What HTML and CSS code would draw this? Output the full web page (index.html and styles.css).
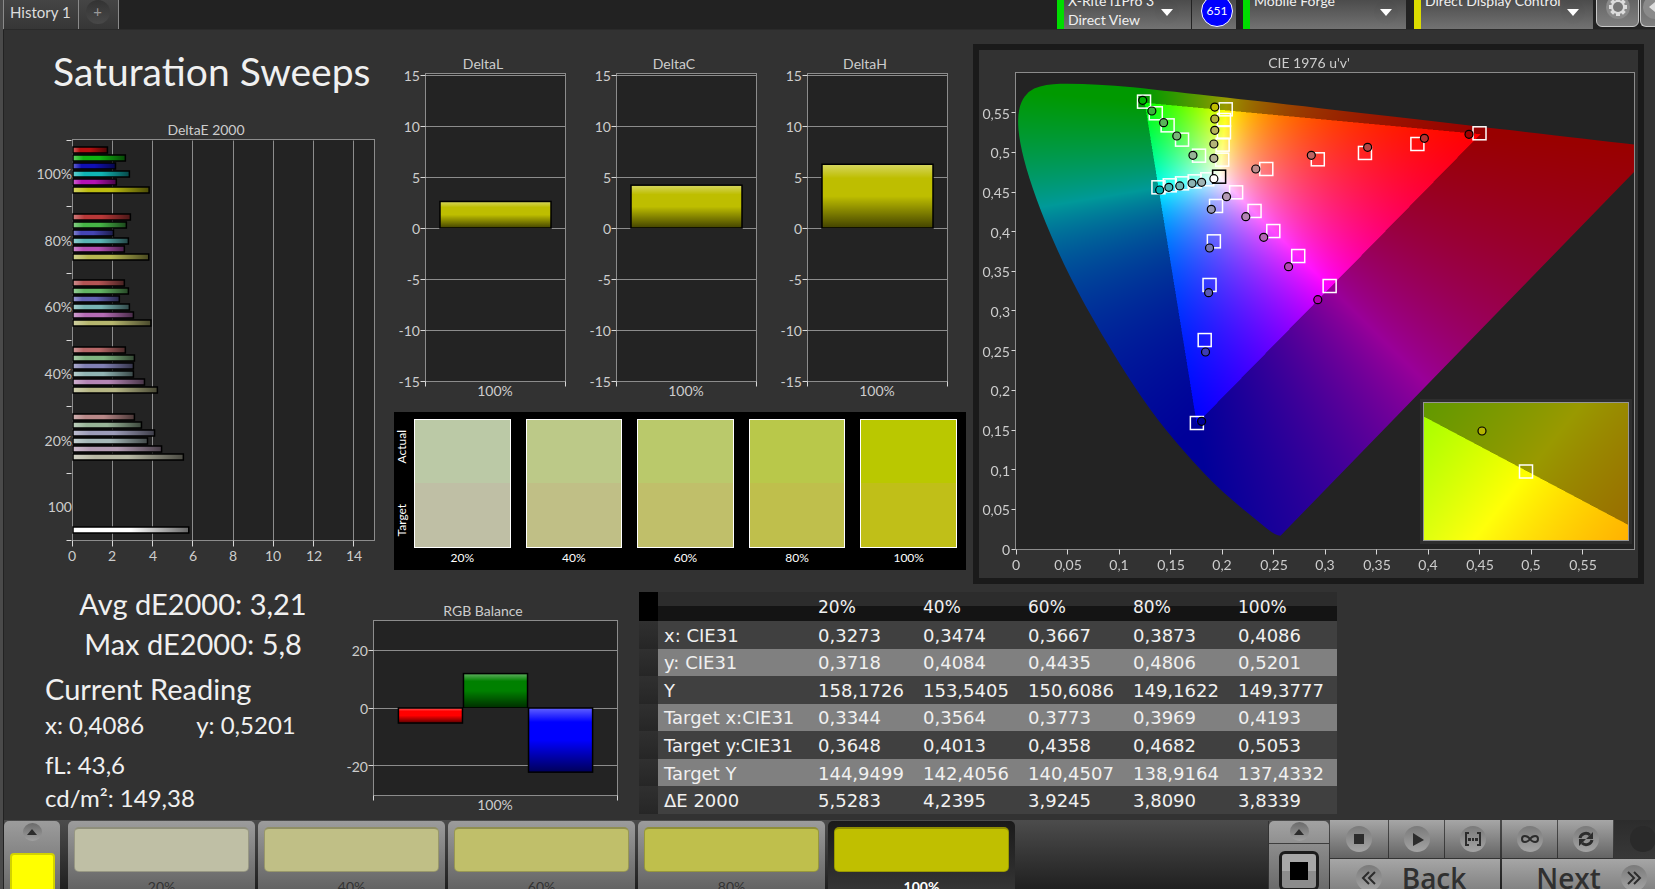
FILE: index.html
```html
<!DOCTYPE html>
<html lang="en">
<head>
    <meta charset="UTF-8">
    <meta name="viewport" content="width=device-width, initial-scale=1.0">
    <title>Saturation Sweeps</title>
    <link rel="stylesheet" href="styles.css">
</head>
<body>
    <header class="topbar">
        <nav class="tabs">
            <button class="tab" type="button">History 1</button>
            <button class="tab tab-add" type="button"><span>+</span></button>
        </nav>
        <div class="devices">
            <button class="device meter" type="button">
                <span class="device-name">X-Rite i1Pro 3<br>Direct View</span>
                <span class="drop"></span>
            </button>
            <div class="counter"><span>651</span></div>
            <button class="device source" type="button">
                <span class="device-name">Mobile Forge</span>
                <span class="drop"></span>
            </button>
            <button class="device display" type="button">
                <span class="device-name">Direct Display Control</span>
                <span class="drop"></span>
            </button>
            <button class="tool" type="button" aria-label="Settings">
                <svg width="28" height="28" viewBox="-14 -14 28 28">
                    <circle r="12" fill="#8a8a8a"/>
                    <g fill="#dcdcdc">
                        <path d="M-2-9h4v18h-4z"/>
                        <path d="M-2-9h4v18h-4z" transform="rotate(45)"/>
                        <path d="M-2-9h4v18h-4z" transform="rotate(90)"/>
                        <path d="M-2-9h4v18h-4z" transform="rotate(135)"/>
                        <circle r="7"/>
                    </g>
                    <circle r="5" fill="#777"/>
                </svg>
            </button>
            <button class="tool tool-cut" type="button" aria-label="Back">
                <svg width="28" height="28" viewBox="-14 -14 28 28">
                    <circle r="12" fill="#8a8a8a"/>
                    <path d="M-6 0L0-5v10z" fill="#dcdcdc"/>
                </svg>
            </button>
        </div>
    </header>

    <main class="board">
        <section class="charts">
            <div class="col-error">
                <h1>Saturation Sweeps</h1>
                <svg id="deltaE" class="chart chart-error"></svg>
            </div>

            <div class="col-delta">
                <div class="deltas">
                    <svg id="deltaL" class="chart chart-delta"></svg>
                    <svg id="deltaC" class="chart chart-delta"></svg>
                    <svg id="deltaH" class="chart chart-delta"></svg>
                </div>
                <div class="swatches">
                    <div class="swatch-side"><span>Actual</span><span>Target</span></div>
                    <figure><div class="pair s20"></div><figcaption>20%</figcaption></figure>
                    <figure><div class="pair s40"></div><figcaption>40%</figcaption></figure>
                    <figure><div class="pair s60"></div><figcaption>60%</figcaption></figure>
                    <figure><div class="pair s80"></div><figcaption>80%</figcaption></figure>
                    <figure><div class="pair s100"></div><figcaption>100%</figcaption></figure>
                </div>
            </div>

            <div class="cie">
                <canvas id="gamut"></canvas>
                <svg id="cie" class="chart chart-cie"></svg>
            </div>
        </section>

        <section class="details">
            <div class="stats">
                <div class="totals">
                    <p>Avg dE2000: 3,21</p>
                    <p>Max dE2000: 5,8</p>
                </div>
                <h2>Current Reading</h2>
                <p class="xy"><span>x: 0,4086</span><span>y: 0,5201</span></p>
                <p class="fl">fL: 43,6</p>
                <p class="cd">cd/m²: 149,38</p>
            </div>

            <svg id="rgb" class="chart chart-rgb"></svg>

            <table class="readings">
                <thead>
                    <tr><th class="mark"></th><th></th><th>20%</th><th>40%</th><th>60%</th><th>80%</th><th>100%</th></tr>
                </thead>
                <tbody>
                    <tr><td class="mark"></td><th>x: CIE31</th><td>0,3273</td><td>0,3474</td><td>0,3667</td><td>0,3873</td><td>0,4086</td></tr>
                    <tr><td class="mark"></td><th>y: CIE31</th><td>0,3718</td><td>0,4084</td><td>0,4435</td><td>0,4806</td><td>0,5201</td></tr>
                    <tr><td class="mark"></td><th>Y</th><td>158,1726</td><td>153,5405</td><td>150,6086</td><td>149,1622</td><td>149,3777</td></tr>
                    <tr><td class="mark"></td><th>Target x:CIE31</th><td>0,3344</td><td>0,3564</td><td>0,3773</td><td>0,3969</td><td>0,4193</td></tr>
                    <tr><td class="mark"></td><th>Target y:CIE31</th><td>0,3648</td><td>0,4013</td><td>0,4358</td><td>0,4682</td><td>0,5053</td></tr>
                    <tr><td class="mark"></td><th>Target Y</th><td>144,9499</td><td>142,4056</td><td>140,4507</td><td>138,9164</td><td>137,4332</td></tr>
                    <tr><td class="mark"></td><th>ΔE 2000</th><td>5,5283</td><td>4,2395</td><td>3,9245</td><td>3,8090</td><td>3,8339</td></tr>
                </tbody>
            </table>
        </section>
    </main>

    <footer class="bottombar">
        <button class="current" type="button" aria-label="Current color">
            <span class="up"></span>
            <span class="current-color"></span>
        </button>
        <div class="steps">
            <button class="step c20" type="button"><span></span>20%</button>
            <button class="step c40" type="button"><span></span>40%</button>
            <button class="step c60" type="button"><span></span>60%</button>
            <button class="step c80" type="button"><span></span>80%</button>
            <button class="step c100 selected" type="button"><span></span>100%</button>
        </div>
        <div class="pattern">
            <button class="pattern-up" type="button" aria-label="Open patterns"><span class="up"></span></button>
            <button class="pattern-stop" type="button" aria-label="Pattern window"><span></span></button>
        </div>
        <div class="transport">
            <div class="keys">
                <button type="button" aria-label="Stop">
                    <svg viewBox="-13 -13 26 26"><path d="M-5-5H5V5H-5z"/></svg>
                </button>
                <button type="button" aria-label="Play">
                    <svg viewBox="-13 -13 26 26"><path d="M-4-6L7 1L-4 7z"/></svg>
                </button>
                <button type="button" aria-label="Read series">
                    <svg viewBox="-13 -13 26 26"><path class="line" d="M-4-6H-7V6H-4M4-6H7V6H4"/><path d="M-5-1h3v3h-3zM-1-1h2v3h-2zM2-1h3v3H2z"/></svg>
                </button>
                <button class="wide-gap" type="button" aria-label="Continuous">
                    <svg viewBox="-13 -13 26 26"><path class="line" d="M0 0C-3-4-8-4-8 0S-3 4 0 0S8-4 8 0S3 4 0 0z"/></svg>
                </button>
                <button type="button" aria-label="Refresh">
                    <svg viewBox="-13 -13 26 26"><path class="line thick" d="M-6-1A6 6 0 0 1 4-4M6 1A6 6 0 0 1-4 4"/><path d="M7-7V0H0zM-7 7V0H0z"/></svg>
                </button>
                <button class="off" type="button" disabled aria-label="Record">
                    <svg viewBox="-13 -13 26 26"></svg>
                </button>
            </div>
            <div class="steps-nav">
                <button class="back" type="button">
                    <svg viewBox="-13 -13 26 26"><path class="line" d="M0-6L-6 0L0 6M6-6L0 0L6 6"/></svg>Back
                </button>
                <button class="next" type="button">
                    Next<svg viewBox="-13 -13 26 26"><path class="line" d="M0-6L6 0L0 6M-6-6L0 0L-6 6"/></svg>
                </button>
            </div>
        </div>
    </footer>

    <svg class="defs" width="0" height="0">
        <defs>
            <linearGradient id="shadeV" x1="0" y1="0" x2="0" y2="1">
                <stop offset="0" stop-color="#fff" stop-opacity=".38"/>
                <stop offset=".22" stop-color="#fff" stop-opacity="0"/>
                <stop offset=".5" stop-color="#000" stop-opacity="0"/>
                <stop offset="1" stop-color="#000" stop-opacity=".65"/>
            </linearGradient>
            <linearGradient id="shadeH">
                <stop offset="0" stop-color="#fff" stop-opacity=".35"/>
                <stop offset=".2" stop-color="#fff" stop-opacity="0"/>
                <stop offset=".5" stop-color="#000" stop-opacity="0"/>
                <stop offset="1" stop-color="#000" stop-opacity=".6"/>
            </linearGradient>
        </defs>
    </svg>

    <script src="charts.js"></script>
</body>
</html>
```

FILE: styles.css
```css
* {
    box-sizing: border-box;
}
body {
    font-family: Lato, Calibri, sans-serif;
    font-size: 14px;
    color: #f0f0f0;
    margin: 0;
    height: 100vh;
    display: flex;
    flex-direction: column;
    overflow: hidden;
    background-color: #323232;
    border-left: 3px solid #4a4a4a;
}
button {
    font-family: inherit;
    font-size: 14px;
    color: inherit;
    border: none;
    padding: 0;
    cursor: pointer;
}
h1, h2, p, figure {
    margin: 0;
    font-weight: normal;
}
.defs {
    display: block;
    flex: none;
}

/* top bar */
.topbar {
    flex: none;
    height: 30px;
    display: flex;
    justify-content: space-between;
    align-items: flex-end;
    background: #222;
    overflow: hidden;
    border-bottom: 1px solid #2a2a2a;
}
.tabs {
    display: flex;
}
.tab {
    height: 40px;
    padding: 5px 7px 0 6px;
    font-size: 15px;
    line-height: 18px;
    color: #dcdcdc;
    background: linear-gradient(#4a4a4a, #363636);
    border-left: 1px solid #8a8a8a;
}
.tab-add {
    padding: 6px 8px 0 7px;
    border-right: 1px solid #8a8a8a;
}
.tab-add span {
    display: block;
    width: 24px;
    height: 24px;
    border-radius: 50%;
    line-height: 23px;
    color: #999;
    background: linear-gradient(#333, #484848);
}
.devices {
    display: flex;
    align-items: flex-end;
}
.device {
    height: 48px;
    display: flex;
    justify-content: space-between;
    align-items: flex-start;
    padding: 10px 8px 0 4px;
    text-align: left;
    line-height: 19px;
    background: linear-gradient(#333, #4c4c4c 40%, #727272);
    border-left: 7px solid #00dc00;
}
.device-name {
    white-space: nowrap;
}
.drop {
    width: 24px;
    height: 24px;
    margin-top: 9px;
    border-radius: 50%;
    background: linear-gradient(#4a4a4a, #6a6a6a);
    display: flex;
    justify-content: center;
    align-items: center;
}
.drop::before {
    content: "";
    border: 6px solid transparent;
    border-top: 7px solid #fff;
    border-bottom: 0;
}
.meter {
    width: 134px;
    padding-right: 12px;
}
.source {
    width: 163px;
    margin-left: 7px;
}
.display {
    width: 179px;
    margin-left: 8px;
    border-left-color: #dcdc00;
}
.counter {
    width: 44px;
    height: 48px;
    display: flex;
    justify-content: center;
    align-items: center;
    padding: 0 0 0 6px;
    margin-left: 1px;
    background: linear-gradient(#333, #4c4c4c 40%, #727272);
}
.counter span {
    width: 32px;
    height: 32px;
    margin-top: 11px;
    border: 1px solid #fff;
    border-radius: 50%;
    background: #00f;
    color: #fff;
    font-size: 12px;
    line-height: 30px;
    text-align: center;
}
.tool {
    width: 43px;
    height: 42px;
    margin: 0 0 2px 3px;
    padding-top: 8px;
    border: 1px solid #c8c8c8;
    border-radius: 6px;
    background: linear-gradient(#555, #808080);
}
.tool-cut {
    width: 15px;
    margin-left: 1px;
    border-right: none;
    border-radius: 6px 0 0 6px;
    overflow: hidden;
}
.tool svg {
    display: block;
    margin: auto;
    margin-top: -7px;
}

/* charts */
.board {
    flex: 1;
    min-height: 0;
    padding: 14px 11px 0 0;
    border-left: 1px solid #222;
}
.charts {
    display: grid;
    grid-template-columns: minmax(0, 384fr) minmax(0, 573fr) minmax(0, 671fr);
    column-gap: 6px;
}
.chart {
    display: block;
    width: 100%;
}
.chart text {
    font-size: 14px;
    fill: #cdcdcd;
}
.col-error {
    padding: 3px 13px 0 33px;
}
h1 {
    font-size: 39px;
    line-height: 48px;
    padding-left: 16px;
    margin-bottom: 25px;
    white-space: nowrap;
}
.chart-error {
    height: 446px;
}
.deltas {
    display: grid;
    grid-template-columns: repeat(3, minmax(0, 1fr));
    column-gap: 22px;
    padding: 10px 18px 0 4px;
}
.chart-delta {
    height: 348px;
}
.swatches {
    display: flex;
    gap: 15px;
    height: 158px;
    margin: 10px 1px 0 0;
    padding: 7px 9px 0 0;
    background: #000;
    font-size: 12px;
    color: #fff;
}
.swatch-side {
    flex: none;
    width: 20px;
    height: 129px;
    margin-right: -15px;
    display: flex;
    flex-direction: column;
}
.swatch-side span {
    flex: 1;
    writing-mode: vertical-rl;
    transform: rotate(180deg);
    text-align: center;
    line-height: 16px;
}
.swatch-side span:first-child {
    padding-top: 8px;
}
.swatch-side span:last-child {
    padding-bottom: 8px;
}
figure {
    flex: 1;
    text-align: center;
}
.pair {
    height: 129px;
    border: 1px solid #fff;
}
figcaption {
    line-height: 20px;
}
.s20 {
    background: linear-gradient(#bbc9a6 50%, #bfbfa5 50%);
}
.s40 {
    background: linear-gradient(#bcc988 50%, #c0bf86 50%);
}
.s60 {
    background: linear-gradient(#bac96b 50%, #c0bf6a 50%);
}
.s80 {
    background: linear-gradient(#b9c84a 50%, #bfbf4c 50%);
}
.s100 {
    background: linear-gradient(#bac800 50%, #c0bf18 50%);
}
.cie {
    display: grid;
    border: 6px solid #1a1a1a;
    height: 540px;
}
.cie canvas {
    grid-area: 1 / 1;
    margin: 23px 0 0 37px;
    background: #232323;
}
.cie svg {
    grid-area: 1 / 1;
    height: 528px;
    z-index: 1;
}

/* numbers */
.details {
    display: flex;
}
.stats {
    flex: none;
    width: 342px;
    padding-left: 41px;
    font-size: 24px;
    line-height: 32px;
}
.totals {
    width: 296px;
    text-align: center;
    font-size: 29px;
    line-height: 40px;
}
h2 {
    font-size: 29px;
    line-height: 36px;
    margin-top: 7px;
}
.xy {
    display: flex;
    gap: 52px;
    margin-top: 2px;
}
.fl {
    margin-top: 8px;
}
.cd {
    margin-top: 1px;
}
.chart-rgb {
    flex: none;
    width: 273px;
    height: 216px;
    margin-top: 17px;
}
.readings {
    width: 698px;
    margin: 8px 0 0 20px;
    border-collapse: collapse;
    table-layout: fixed;
    font-family: "DejaVu Sans", Verdana, sans-serif;
    font-size: 18px;
    height: 222px;
}
.readings th, .readings td {
    height: 27px;
    padding: 2px 0 0 6px;
    line-height: 20px;
    text-align: left;
    font-weight: normal;
    white-space: nowrap;
}
.readings thead th {
    height: 29px;
    width: 105px;
    padding-top: 0;
    font-size: 17px;
    background: linear-gradient(#2c2c2c 50%, #141414 50%);
}
.readings thead th:nth-child(2) {
    width: 154px;
}
.readings tbody tr {
    background: #404040;
}
.readings tbody tr:nth-child(even) {
    background: #808080;
}
.readings .mark {
    background: linear-gradient(#303030, #262626);
    padding: 0;
}
.readings thead .mark {
    width: 19px;
    background: #000;
}

/* bottom bar */
.bottombar {
    flex: none;
    height: 69px;
    display: flex;
    align-items: flex-start;
    background: linear-gradient(#4c4c4c, #202020);
    border-left: 1px solid #222;
    overflow: hidden;
}
.up {
    display: flex;
    width: 19px;
    height: 19px;
    border-radius: 50%;
    justify-content: center;
    align-items: center;
    background: linear-gradient(#6a6a6a, #a0a0a0);
}
.up::before {
    content: "";
    border: 5px solid transparent;
    border-bottom: 6px solid #2c2c2c;
    border-top: 0;
}
.current {
    flex: none;
    width: 56px;
    height: 90px;
    display: flex;
    flex-direction: column;
    align-items: center;
    padding-top: 2px;
    margin-top: 1px;
    gap: 12px;
    border-radius: 5px;
    background: linear-gradient(#9c9c9c, #5c5c5c);
}
.current-color {
    width: 45px;
    height: 60px;
    border-radius: 4px;
    background: #ff0;
    border: 2px solid #d2d200;
}
.steps {
    flex: 1;
    display: flex;
    gap: 3px;
    padding: 1px 0 0 8px;
}
.step {
    width: 187px;
    height: 90px;
    display: flex;
    flex-direction: column;
    align-items: center;
    padding-top: 6px;
    line-height: 16px;
    color: #333;
    border-radius: 5px;
    background: linear-gradient(#9c9c9c, #646464 75%);
}
.step span {
    width: 175px;
    height: 45px;
    margin-bottom: 7px;
    border-radius: 5px;
    border: 1px solid rgba(0, 0, 0, 0.2);
    border-top: 2px solid rgba(0, 0, 0, 0.25);
}
.step.selected {
    color: #fff;
    font-weight: bold;
    background: linear-gradient(#1a1a1a, #343434 75%);
}
.c20 span {
    background: #bfbfa5;
}
.c40 span {
    background: #c0bf86;
}
.c60 span {
    background: #c0bf6a;
}
.c80 span {
    background: #bfbf4c;
}
.c100 span {
    background: #c0bf00;
}
.pattern {
    flex: none;
    width: 61px;
    margin-top: 1px;
    border-left: 1px solid #333;
}
.pattern-up {
    width: 100%;
    height: 22px;
    padding-top: 1px;
    display: flex;
    justify-content: center;
    border-radius: 5px 5px 0 0;
    background: linear-gradient(#a2a2a2, #909090);
}
.pattern-stop {
    width: 100%;
    height: 60px;
    margin-top: 1px;
    padding-top: 7px;
    display: flex;
    justify-content: center;
    align-items: flex-start;
    background: linear-gradient(#8c8c8c, #606060);
}
.pattern-stop span {
    width: 40px;
    height: 40px;
    border: 3px solid #1c1c1c;
    border-radius: 6px;
    background: linear-gradient(#000, #000) center / 18px 18px no-repeat, linear-gradient(#a8a8a8 50%, #8c8c8c 50%);
}
.transport {
    flex: none;
    width: 325px;
    margin-left: 1px;
}
.keys, .steps-nav {
    display: flex;
    gap: 1px;
}
.transport button {
    flex: none;
    display: flex;
    align-items: center;
    justify-content: center;
    background: linear-gradient(#a6a6a6, #646464);
}
.transport svg {
    width: 26px;
    height: 26px;
    border-radius: 50%;
    background: linear-gradient(#7a7a7a, #a4a4a4);
    fill: #2c2c2c;
}
.transport .line {
    fill: none;
    stroke: #2c2c2c;
    stroke-width: 2;
}
.transport .thick {
    stroke-width: 3;
}
.keys button {
    width: 55px;
    height: 38px;
}
.keys button:first-child {
    width: 58px;
}
.keys .wide-gap, .steps-nav .next {
    margin-left: 1px;
}
.keys .off {
    background: linear-gradient(#2c2c2c, #383838);
    width: 58px;
}
.keys .off svg {
    background: #2a2a2a;
}
.steps-nav {
    margin-top: 1px;
}
.transport .steps-nav button {
    width: 170px;
    height: 56px;
    align-items: flex-start;
    padding: 0 8px 0 0;
    gap: 20px;
    font-family: "Open Sans", "Noto Sans", sans-serif;
    font-size: 28px;
    font-weight: 600;
    line-height: 38px;
    color: #303030;
}
.transport .steps-nav .next {
    padding: 0 0 0 9px;
}
.steps-nav svg {
    margin-top: 6px;
}
```

FILE: charts.js
```js
const GRID = '#8c8c8c';
const TICK = '#d8d8d8';

function add(parent, name, attrs, text) {
    const el = document.createElementNS('http://www.w3.org/2000/svg', name);
    for (const key in attrs) el.setAttribute(key, attrs[key]);
    if (text !== undefined) el.textContent = text;
    parent.appendChild(el);
    return el;
}

function line(svg, x1, y1, x2, y2, color) {
    const snap = v => Math.floor(v) + 0.5;
    add(svg, 'line', { x1: snap(x1), y1: snap(y1), x2: snap(x2), y2: snap(y2), stroke: color || GRID });
}

function label(svg, x, y, text, anchor) {
    add(svg, 'text', { x: Math.round(x), y: Math.round(y), 'text-anchor': anchor || 'middle' }, text);
}

function bar(svg, x, y, w, h, color, shade) {
    const box = { x: x, y: y, width: w, height: h };
    add(svg, 'rect', { ...box, fill: color });
    add(svg, 'rect', { ...box, fill: 'url(#' + shade + ')', stroke: '#000', 'stroke-width': 1.5 });
}

// DeltaE 2000, one group of bars for each saturation
const errorGroups = [
    ['100%', [[1.76, '#b41010'], [2.65, '#10b410'], [2.16, '#1010b4'], [2.85, '#10b4b4'], [2.2, '#b410b4'], [3.83, '#bcbc10']]],
    ['80%', [[2.9, '#b83838'], [2.7, '#46b446'], [2.06, '#4444b4'], [2.8, '#5ab4b4'], [2.6, '#b450b4'], [3.81, '#b6b650']]],
    ['60%', [[2.6, '#b45454'], [2.8, '#62b462'], [2.35, '#6464b4'], [2.85, '#78b4b4'], [3.05, '#b46cb4'], [3.92, '#b6b66e']]],
    ['40%', [[2.65, '#b86868'], [3.1, '#80b480'], [3.05, '#8080b4'], [3.05, '#90b4b4'], [3.6, '#b485b4'], [4.24, '#b6b685']]],
    ['20%', [[3.1, '#b88888'], [3.45, '#98b498'], [4.1, '#9c9cb8'], [3.75, '#a6b8b8'], [4.45, '#b49cb4'], [5.53, '#b8b8a4']]],
    ['100', [[5.8, '#ffffff']]]
];

function drawErrors() {
    const svg = document.getElementById('deltaE');
    svg.innerHTML = '';
    const w = svg.clientWidth, left = 35, right = w - 1, top = 20, bottom = 420;
    const unit = (right - left) / 15, step = (bottom - top) / 6;
    label(svg, w / 2, 15, 'DeltaE 2000');
    add(svg, 'rect', { x: left + 0.5, y: top - 0.5, width: right - left, height: bottom - top + 1, fill: '#232323', stroke: GRID });
    for (let v = 0; v <= 14; v += 2) {
        if (v) line(svg, left + v * unit, top, left + v * unit, bottom);
        line(svg, left + v * unit, bottom, left + v * unit, bottom + 6, TICK);
        label(svg, left + v * unit, 441, v);
    }
    errorGroups.forEach((group, i) => {
        const y = top + i * step;
        line(svg, left - 6, y, left - 1, y, TICK);
        label(svg, left, y + 39, group[0], 'end');
        group[1].forEach((b, n) => {
            const offset = group[1].length == 1 ? 54 : 7 + n * 8;
            bar(svg, left + 1, Math.round(y + offset), b[0] * unit - 1, 6, b[1], 'shadeH');
        });
    });
    line(svg, left - 6, bottom, left - 1, bottom, TICK);
}

// vertical bars around a zero line
function drawColumns(id, o) {
    const svg = document.getElementById(id);
    svg.innerHTML = '';
    const w = svg.clientWidth, left = 27, right = w - 2;
    const y = v => o.zero - v * o.unit;
    label(svg, w / 2, 15, o.title);
    add(svg, 'rect', { x: left + 0.5, y: o.top + 0.5, width: right - left, height: o.bottom - o.top, fill: '#232323', stroke: GRID });
    o.ticks.forEach(v => {
        line(svg, left, y(v), right, y(v));
        line(svg, left - 5, y(v), left, y(v), TICK);
        label(svg, left - 5, y(v) + 6, v, 'end');
    });
    line(svg, left, o.bottom, left, o.bottom + 5, TICK);
    line(svg, right, o.bottom, right, o.bottom + 5, TICK);
    const inner = (right - left) * 0.8, bw = inner / o.bars.length;
    o.bars.forEach((b, i) => {
        const a = Math.min(y(0), y(b[0])), h = Math.abs(b[0]) * o.unit;
        bar(svg, left + 1 + (right - left) * 0.1 + i * bw, a, bw - 1, h, b[1], 'shadeV');
    });
    label(svg, (left + right) / 2, o.bottom + 15, '100%');
}

// CIE 1976 diagram
const locus = [[.1741, .005], [.1714, .0051], [.1644, .0109], [.1566, .0177], [.144, .0297], [.1241, .0578], [.1096, .0868],
    [.0913, .1327], [.0687, .2007], [.0454, .295], [.0235, .4127], [.0082, .5384], [.0039, .6548], [.0139, .7502],
    [.0389, .812], [.0743, .8338], [.1142, .8262], [.1547, .8059], [.2296, .7543], [.3016, .6923], [.3731, .6245],
    [.4441, .5547], [.5125, .4866], [.5752, .4242], [.627, .3725], [.6658, .334], [.6915, .3083], [.719, .2809], [.7347, .2653]];

const targets = [[.45, .524], [.3897, .5105], [.3388, .4992], [.293, .4912], [.243, .479],
    [.1243, .5639], [.1357, .5492], [.1472, .534], [.1612, .516], [.1777, .4958],
    [.2036, .5542], [.2019, .5408], [.2019, .5252], [.2006, .5097], [.2002, .4908],
    [.1383, .4559], [.1493, .4584], [.1612, .4609], [.1735, .4634], [.1857, .466],
    [.2137, .4496], [.2316, .4261], [.2498, .4008], [.274, .3693], [.3045, .3315],
    [.1942, .4324], [.1921, .3878], [.1879, .3328], [.1832, .2634], [.1756, .1588]];

const measured = [[.4398, .5227, '#a00000'], [.3965, .5176, '#b43232'], [.3414, .5063, '#b44646'], [.2867, .4962, '#be6464'], [.2328, .479, '#be8c8c'],
    [.123, .5655, '#00b400'], [.1319, .5521, '#3cb43c'], [.1433, .5374, '#5ab45a'], [.1561, .5206, '#78b478'], [.1718, .4962, '#96b496'],
    [.193, .5571, '#bebe00'], [.193, .542, '#b4b43c'], [.193, .5277, '#b4b45a'], [.1921, .5105, '#b4b478'], [.1921, .4924, '#b4b496'],
    [.1395, .4525, '#00b4b4'], [.1484, .4559, '#50b4b4'], [.159, .4576, '#6eb4b4'], [.1709, .4609, '#8cb4b4'], [.1802, .4622, '#a0b4b4'],
    [.2044, .4441, '#b49bb4'], [.2231, .4189, '#b482b4'], [.2405, .3929, '#b464b4'], [.2646, .3559, '#b446b4'], [.293, .3143, '#b400b4'],
    [.1896, .4282, '#9696b4'], [.1879, .3794, '#7878b4'], [.187, .3231, '#5a5ab4'], [.184, .2483, '#3c3cb4'], [.1802, .1609, '#000096']];

// u'v' to a display color, dimmed when it is out of Rec. 709
function uvColor(u, v) {
    const X = 9 * u / (4 * v), Z = (12 - 3 * u - 20 * v) / (4 * v);
    const rgb = [3.2406 * X - 1.5372 - 0.4986 * Z, -0.9689 * X + 1.8758 + 0.0415 * Z, 0.0557 * X - 0.204 + 1.057 * Z];
    const dim = Math.min(...rgb) < 0 ? 0.6 : 1;
    const max = Math.max(...rgb);
    return rgb.map(c => 255 * dim * Math.max(c, 0) / max);
}

function paint(w, h, toUV) {
    const layer = document.createElement('canvas');
    layer.width = w;
    layer.height = h;
    const ctx = layer.getContext('2d');
    const img = ctx.createImageData(w, h);
    for (let y = 0; y < h; y++) {
        for (let x = 0; x < w; x++) {
            const sum = [0, 0, 0];
            for (const [dx, dy] of [[.25, .25], [.75, .25], [.25, .75], [.75, .75]]) {
                uvColor(...toUV(x + dx, y + dy)).forEach((c, i) => sum[i] += c / 4);
            }
            img.data.set([...sum, 255], (y * w + x) * 4);
        }
    }
    ctx.putImageData(img, 0, 0);
    return layer;
}

function drawCie() {
    const svg = document.getElementById('cie');
    svg.innerHTML = '';
    const full = svg.clientWidth, left = 37, top = 23, bottom = 499;
    const w = full - left - 4, h = bottom - top;
    const sx = w / 0.6, sy = h / 0.6;

    const canvas = document.getElementById('gamut');
    canvas.width = w;
    canvas.height = h;
    const ctx = canvas.getContext('2d');
    ctx.drawImage(paint(w, h, (x, y) => [x / sx, (h - y) / sy]), 0, 0);
    ctx.globalCompositeOperation = 'destination-in';
    ctx.beginPath();
    const pts = locus.map(([x, y]) => {
        const d = -2 * x + 12 * y + 3;
        return [4 * x / d * sx, h - 9 * y / d * sy];
    });
    ctx.moveTo(...pts[0]);
    for (let i = 1; i < pts.length - 1; i++) {
        ctx.quadraticCurveTo(...pts[i], (pts[i][0] + pts[i + 1][0]) / 2, (pts[i][1] + pts[i + 1][1]) / 2);
    }
    ctx.lineTo(...pts[pts.length - 1]);
    ctx.closePath();
    ctx.fill();
    ctx.globalCompositeOperation = 'source-over';

    // zoom on the selected color, its axes follow the gamut edge and the yellow ridge
    const iw = 206, ih = 139, ix = w - iw - 5, iy = h - ih - 8;
    ctx.fillStyle = '#2e2e2e';
    ctx.fillRect(ix - 3, iy - 3, iw + 6, ih + 6);
    ctx.drawImage(paint(iw, ih, (x, y) => {
        const dx = x - iw / 2, dy = y - ih / 2;
        const du = (dx + 0.76 * dy) / 6500;
        return [.2036 + du, .5529 - .1216 * du - (dy - 0.53 * dx) / 18000];
    }), ix, iy);

    label(svg, full / 2, 18, "CIE 1976 u'v'");
    add(svg, 'rect', { x: left - 0.5, y: top - 0.5, width: w + 1, height: h + 1, fill: 'none', stroke: GRID });
    for (let i = 0; i < 12; i++) {
        const text = String(i * 5 / 100).replace('.', ',');
        const x = left + i * 0.05 * sx, y = bottom - i * 0.05 * sy;
        line(svg, x, bottom, x, bottom + 5, TICK);
        label(svg, x, bottom + 21, text);
        line(svg, left - 5, y, left - 1, y, TICK);
        label(svg, left - 6, y + 6, text, 'end');
    }

    const square = (x, y, color) => add(svg, 'rect', { x: x - 6.5, y: y - 6.5, width: 13, height: 13, fill: 'none', stroke: color, 'stroke-width': 1.5 });
    const dot = (x, y, color) => add(svg, 'circle', { cx: x, cy: y, r: 4, fill: color, stroke: '#000', 'stroke-width': 1.2 });
    targets.forEach(([u, v]) => square(left + u * sx, bottom - v * sy, '#fff'));
    square(left + .1972 * sx, bottom - .4693 * sy, '#000');
    measured.forEach(([u, v, c]) => dot(left + u * sx, bottom - v * sy, c));
    dot(left + .1921 * sx, bottom - .4668 * sy, '#fff');

    add(svg, 'rect', { x: left + ix + 0.5, y: top + iy + 0.5, width: iw - 1, height: ih - 1, fill: 'none', stroke: '#969696' });
    square(left + ix + iw / 2, top + iy + ih / 2, '#fff');
    dot(left + ix + 59, top + iy + 29, '#b4b400');
}

function draw() {
    drawErrors();
    const delta = { top: 19, zero: 174, unit: 10.2, bottom: 327, ticks: [15, 10, 5, 0, -5, -10, -15] };
    drawColumns('deltaL', { ...delta, title: 'DeltaL', bars: [[2.6, '#bebe00']] });
    drawColumns('deltaC', { ...delta, title: 'DeltaC', bars: [[4.2, '#bebe00']] });
    drawColumns('deltaH', { ...delta, title: 'DeltaH', bars: [[6.25, '#bebe00']] });
    drawColumns('rgb', {
        title: 'RGB Balance', top: 19, zero: 107, unit: 2.89, bottom: 194, ticks: [20, 0, -20],
        bars: [[-5.2, '#ff0000'], [11.9, '#008000'], [-22.2, '#0000ff']]
    });
    drawCie();
}

draw();
window.addEventListener('resize', draw);
```
